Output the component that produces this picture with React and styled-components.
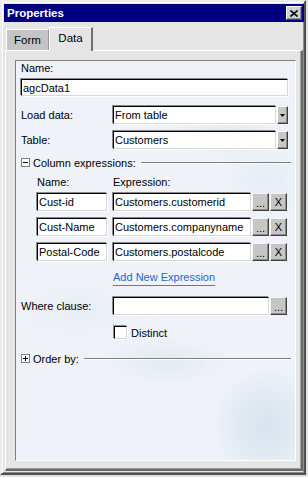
import React from 'react'
import styled, { createGlobalStyle } from 'styled-components'

const GlobalStyle = createGlobalStyle`
  html, body {
    margin: 0;
    padding: 0;
    background: #e2e2e2;
  }
  body {
    font-family: "Liberation Sans", Arial, sans-serif;
    font-size: 11px;
    color: #000;
  }
  * { box-sizing: border-box; }
`

const Window = styled.div`
  width: 306px;
  height: 475px;
  display: flex;
  flex-direction: column;
  padding: 2px 0 2px 2px;
  background: #e5e5e5;
  border: 2px solid;
  border-color: #ececec #505050 #505050 #ececec;
  box-shadow: inset 1px 1px 0 #fff, inset -1px -1px 0 #8c8c8c;
`

const TitleBar = styled.div`
  height: 18px;
  flex: none;
  display: flex;
  align-items: center;
  justify-content: space-between;
  padding: 0 2px 0 3px;
  background: #000080;
  color: #fff;
  font-weight: bold;
  font-size: 11.5px;
`

const CloseButton = styled.div`
  width: 16px;
  height: 14px;
  display: flex;
  align-items: center;
  justify-content: center;
  background: #d0d0d0;
  border: 1px solid;
  border-color: #fff #404040 #404040 #fff;
  box-shadow: inset -1px -1px 0 #909090;
`

const TabStrip = styled.div`
  flex: none;
  height: 23px;
  margin-top: 5px;
  padding-left: 2px;
  display: flex;
  align-items: flex-end;
`

const Tab = styled.div`
  position: relative;
  display: flex;
  align-items: center;
  justify-content: center;
  width: ${p => (p.$active ? 44 : 43)}px;
  height: ${p => (p.$active ? 24 : 21)}px;
  margin-bottom: ${p => (p.$active ? -1 : 0)}px;
  padding-bottom: ${p => (p.$active ? 3 : 0)}px;
  z-index: ${p => (p.$active ? 1 : 0)};
  background: ${p => (p.$active ? '#e5e5e5' : '#c4c4c4')};
  border-top: 1px solid #fff;
  border-left: 1px solid #fff;
  border-right: ${p => (p.$active ? '2px solid #707070' : '1px solid #9a9a9a')};
  font-size: 11.5px;
`

const TabPanel = styled.div`
  flex: 1;
  display: flex;
  margin: 0 1px 0 1px;
  padding: 9px 5px 8px 9px;
  border-top: 1px solid #fff;
  border-left: 1px solid #fff;
  border-right: 2px solid #6a6a6a;
  border-bottom: 2px solid #6a6a6a;
  box-shadow: inset -1px -1px 0 #a0a0a0;
`

const Content = styled.div`
  flex: 1;
  display: flex;
  flex-direction: column;
  padding: 1px 7px 0 5px;
  border: 1px solid;
  border-color: #808080 #fff #fff #808080;
  background:
    radial-gradient(ellipse 55px 60px at 250px 365px, #d8e3ee 0%, #e2eaf3 55%, rgba(235, 241, 248, 0) 100%),
    radial-gradient(ellipse 70px 25px at 150px 300px, #e3eaf2 0%, rgba(235, 241, 248, 0) 100%),
    radial-gradient(ellipse 60px 30px at 210px 70px, #e4ebf3 0%, rgba(235, 241, 248, 0) 100%),
    radial-gradient(ellipse 80px 30px at 60px 250px, #e8eef5 0%, rgba(235, 241, 248, 0) 100%),
    radial-gradient(ellipse 50px 40px at 250px 120px, #e6edf5 0%, rgba(235, 241, 248, 0) 100%),
    #eff3f9;
`

const Label = styled.div`
  line-height: 13px;
  margin-top: ${p => p.$mt || 0}px;
  padding-left: ${p => p.$indent || 0}px;
  width: ${p => (p.$w ? p.$w + 'px' : 'auto')};
  flex: none;
`

const Row = styled.div`
  display: flex;
  align-items: center;
  margin-top: ${p => p.$mt || 0}px;
  padding-left: ${p => p.$indent || 0}px;
`

const Field = styled.div`
  height: ${p => p.$h || 18}px;
  width: ${p => (p.$w ? p.$w + 'px' : 'auto')};
  flex: ${p => (p.$w ? 'none' : 1)};
  margin-left: ${p => p.$ml || 0}px;
  display: flex;
  align-items: center;
  padding: 0 1px;
  background: #fff;
  border: 1px solid;
  border-color: #000 #d8d8d8 #d8d8d8 #000;
  box-shadow: -1px -1px 0 #8a8a8a, 1px 1px 0 #fff;
  white-space: nowrap;
  overflow: hidden;
`

const Select = styled.div`
  display: flex;
  gap: 1px;
  flex: 1;
  height: 18px;
`

const ArrowButton = styled.div`
  width: 11px;
  flex: none;
  display: flex;
  align-items: center;
  justify-content: center;
  background: #c8c8c8;
  border: 1px solid;
  border-color: #fff #404040 #404040 #fff;
  box-shadow: inset -1px -1px 0 #8c8c8c;
`

const SmallButton = styled.div`
  width: 17px;
  height: 18px;
  flex: none;
  margin-left: 1px;
  display: flex;
  align-items: ${p => (p.$dots ? 'flex-end' : 'center')};
  justify-content: center;
  padding-bottom: ${p => (p.$dots ? 2 : 0)}px;
  background: #c6c6c6;
  border: 1px solid;
  border-color: #f4f4f4 #404040 #404040 #f4f4f4;
  box-shadow: inset -1px -1px 0 #8c8c8c;
  line-height: 10px;
  font-size: 11px;
`

const SectionHead = styled.div`
  display: flex;
  align-items: center;
  height: 13px;
  margin-top: ${p => p.$mt || 0}px;
  margin-right: -3px;
`

const Toggle = styled.div`
  width: 9px;
  height: 9px;
  flex: none;
  position: relative;
  background: #fff;
  border: 1px solid #808080;
  &::before {
    content: '';
    position: absolute;
    left: 1px;
    top: 3px;
    width: 5px;
    height: 1px;
    background: #000;
  }
  &::after {
    content: '';
    display: ${p => (p.$plus ? 'block' : 'none')};
    position: absolute;
    left: 3px;
    top: 1px;
    width: 1px;
    height: 5px;
    background: #000;
  }
`

const SectionTitle = styled.span`
  margin-left: 3px;
  white-space: nowrap;
`

const Rule = styled.div`
  flex: 1;
  margin-left: 5px;
  border-top: 1px solid #808080;
  border-bottom: 1px solid #fff;
`

const Link = styled.div`
  align-self: flex-start;
  margin: ${p => p.$mt}px 0 0 92px;
  line-height: 13px;
  padding-bottom: 1px;
  color: #1c68c8;
  border-bottom: 1px solid #2a86e6;
`

const Check = styled.div`
  width: 13px;
  height: 13px;
  flex: none;
  background: #fff;
  border: 1px solid;
  border-color: #000 #d8d8d8 #d8d8d8 #000;
  box-shadow: -1px -1px 0 #8a8a8a, 1px 1px 0 #fff;
  margin: 0 4px 0 93px;
`

const exprs = [
  ['Cust-id', 'Customers.customerid'],
  ['Cust-Name', 'Customers.companyname'],
  ['Postal-Code', 'Customers.postalcode'],
]

const Arrow = () => (
  <svg width="5" height="3" viewBox="0 0 5 3">
    <path d="M0 0H5L2.5 3Z" fill="#000" />
  </svg>
)

const CloseX = () => (
  <svg width="8" height="7" viewBox="0 0 8 7">
    <path d="M0.5 0.5L7.5 6.5M7.5 0.5L0.5 6.5" stroke="#000" strokeWidth="1.6" />
  </svg>
)

export default function App() {
  return (
    <>
      <GlobalStyle />
      <Window>
        <TitleBar>
          <span>Properties</span>
          <CloseButton><CloseX /></CloseButton>
        </TitleBar>
        <TabStrip>
          <Tab>Form</Tab>
          <Tab $active>Data</Tab>
        </TabStrip>
        <TabPanel>
          <Content>
            <Label>Name:</Label>
            <Row $mt={4}>
              <Field $h={17}>agcData1</Field>
            </Row>
            <Row $mt={10}>
              <Label $w={92}>Load data:</Label>
              <Select>
                <Field>From table</Field>
                <ArrowButton><Arrow /></ArrowButton>
              </Select>
            </Row>
            <Row $mt={7}>
              <Label $w={92}>Table:</Label>
              <Select>
                <Field>Customers</Field>
                <ArrowButton><Arrow /></ArrowButton>
              </Select>
            </Row>
            <SectionHead $mt={7}>
              <Toggle />
              <SectionTitle>Column expressions:</SectionTitle>
              <Rule />
            </SectionHead>
            <Row $mt={7} $indent={16}>
              <Label $w={76}>Name:</Label>
              <Label>Expression:</Label>
            </Row>
            {exprs.map(([name, expr], idx) => (
              <Row key={idx} $mt={idx === 0 ? 4 : 7} $indent={16}>
                <Field $w={70}>{name}</Field>
                <Field $w={138} $ml={6}>{expr}</Field>
                <SmallButton $dots>...</SmallButton>
                <SmallButton>X</SmallButton>
              </Row>
            ))}
            <Link $mt={10}>Add New Expression</Link>
            <Row $mt={11}>
              <Label $w={92}>Where clause:</Label>
              <Field $w={156}></Field>
              <SmallButton $dots>...</SmallButton>
            </Row>
            <Row $mt={11}>
              <Check />
              <span>Distinct</span>
            </Row>
            <SectionHead $mt={13}>
              <Toggle $plus />
              <SectionTitle>Order by:</SectionTitle>
              <Rule />
            </SectionHead>
          </Content>
        </TabPanel>
      </Window>
    </>
  )
}
